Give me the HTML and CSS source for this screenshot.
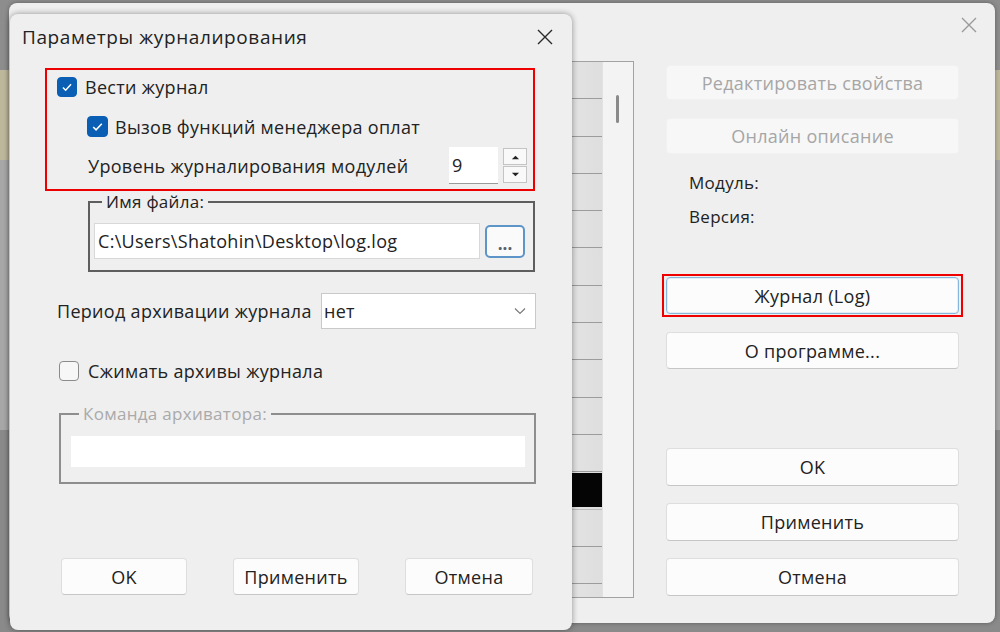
FILE: index.html
```html
<!DOCTYPE html>
<html lang="ru">
<head>
    <meta charset="UTF-8">
    <title>Параметры журналирования</title>
    <link rel="stylesheet" href="styles.css">
</head>
<body>
<div class="desktop">

    <!-- main window, mostly hidden behind the dialog -->
    <div class="window main-window">
        <div class="main-titlebar">
            <svg class="close close-muted" viewBox="0 0 16 16"><path d="M1 1L15 15M15 1L1 15"/></svg>
        </div>
        <div class="main-body">
            <div class="module-list">
                <div class="rows">
                    <div class="row"></div>
                    <div class="row"></div>
                    <div class="row"></div>
                    <div class="row"></div>
                    <div class="row"></div>
                    <div class="row"></div>
                    <div class="row"></div>
                    <div class="row"></div>
                    <div class="row"></div>
                    <div class="row"></div>
                    <div class="row"></div>
                    <div class="row row-black"><span class="cell"></span></div>
                    <div class="row"></div>
                    <div class="row"></div>
                    <div class="row"></div>
                </div>
                <div class="scrollbar"><span class="thumb"></span></div>
            </div>

            <div class="side-panel">
                <button class="btn btn-disabled">Редактировать свойства</button>
                <button class="btn btn-disabled btn-online">Онлайн описание</button>
                <div class="info info-module">Модуль:</div>
                <div class="info info-version">Версия:</div>
                <div class="mark mark-log">
                    <button class="btn btn-focus">Журнал (Log)</button>
                </div>
                <button class="btn btn-about">О программе...</button>
                <button class="btn btn-ok">OK</button>
                <button class="btn btn-apply">Применить</button>
                <button class="btn btn-apply">Отмена</button>
            </div>
        </div>
    </div>

    <!-- logging options dialog -->
    <div class="window dialog">
        <div class="titlebar">
            <span class="title">Параметры журналирования</span>
            <svg class="close" viewBox="0 0 16 16"><path d="M1 1L15 15M15 1L1 15"/></svg>
        </div>

        <div class="dialog-body">
            <div class="mark mark-options">
                <div class="check-row">
                    <span class="check checked"><svg viewBox="0 0 20 20"><path d="M5.5 10.5l3 3 6-6.5"/></svg></span>
                    <span>Вести журнал</span>
                </div>
                <div class="check-row check-sub">
                    <span class="check checked"><svg viewBox="0 0 20 20"><path d="M5.5 10.5l3 3 6-6.5"/></svg></span>
                    <span>Вызов функций менеджера оплат</span>
                </div>
                <div class="level-row">
                    <span>Уровень журналирования модулей</span>
                    <div class="spin">
                        <span class="spin-value">9</span>
                        <div class="spin-buttons">
                            <span class="spin-btn"><svg viewBox="0 0 10 6"><path d="M1 5.5L5 1.5 9 5.5Z"/></svg></span>
                            <span class="spin-btn"><svg viewBox="0 0 10 6"><path d="M1 0.5L5 4.5 9 0.5Z"/></svg></span>
                        </div>
                    </div>
                </div>
            </div>

            <fieldset class="group file-group">
                <legend>Имя файла:</legend>
                <div class="file-row">
                    <div class="edit file-edit">C:\Users\Shatohin\Desktop\log.log</div>
                    <button class="browse">...</button>
                </div>
            </fieldset>

            <div class="period-row">
                <span>Период архивации журнала</span>
                <div class="combo">
                    <span>нет</span>
                    <svg viewBox="0 0 12 8"><path d="M1 1.5L6 6.5 11 1.5"/></svg>
                </div>
            </div>

            <div class="check-row compress-row">
                <span class="check"></span>
                <span>Сжимать архивы журнала</span>
            </div>

            <fieldset class="group archiver-group">
                <legend>Команда архиватора:</legend>
                <div class="edit archiver-edit"></div>
            </fieldset>

            <div class="dialog-buttons">
                <button class="btn btn-dialog">OK</button>
                <button class="btn btn-dialog">Применить</button>
                <button class="btn btn-dialog btn-cancel">Отмена</button>
            </div>
        </div>
    </div>

</div>
</body>
</html>
```

FILE: styles.css
```css
* {
    box-sizing: border-box;
}

html, body {
    margin: 0;
    padding: 0;
}

body {
    font-family: "Open Sans", "Noto Sans", sans-serif;
    font-size: 18px;
    letter-spacing: 0.3px;
    color: #222222;
    overflow: hidden;
}

.desktop {
    position: relative;
    width: 1000px;
    height: 632px;
    background: linear-gradient(to bottom, #8d8d8d 0, #8d8d8d 70px, #bdb79c 70px, #bdb79c 160px, #a7a7a7 160px, #a7a7a7 430px, #8a8a8a 430px);
}

.window {
    position: absolute;
    background-color: #efefef;
}

/* ---------- main window ---------- */

.main-window {
    left: 9px;
    top: 3px;
    width: 986px;
    height: 620px;
    border-radius: 8px;
    box-shadow: 0 0 4px rgba(0, 0, 0, 0.35);
    display: flex;
    flex-direction: column;
}

.main-titlebar {
    height: 43px;
    display: flex;
    justify-content: flex-end;
    align-items: center;
    padding-right: 18px;
}

.close {
    width: 16px;
    height: 16px;
    fill: none;
    stroke: #2a2a2a;
    stroke-width: 1.4;
}

.close-muted {
    stroke: #9a9a9a;
}

.main-body {
    display: flex;
    padding-top: 15px;
    padding-right: 36px;
}

.module-list {
    flex: 1;
    height: 537px;
    margin-left: 12px;
    border: 1px solid #a2a2a2;
    display: flex;
    overflow: hidden;
}

.rows {
    flex: 1;
    display: flex;
    flex-direction: column;
}

.row {
    flex: 0 0 37.3px;
    border-bottom: 1px solid #9c9c9c;
    background: linear-gradient(to right, #f6f6f6, #ebebeb 85%, #dedede);
    display: flex;
    align-items: center;
}

.row-black .cell {
    margin-left: auto;
    width: 31px;
    height: 34px;
    background-color: #050505;
}

.row-black {
    border-bottom-color: #bdbdbd;
}

.scrollbar {
    width: 31px;
    background-color: #f3f3f3;
    border-left: 1px solid #e2e2e2;
    padding-top: 33px;
    padding-left: 13px;
}

.thumb {
    display: block;
    width: 3px;
    height: 28px;
    border-radius: 2px;
    background-color: #8a8a8a;
}

.side-panel {
    width: 293px;
    margin-left: 32px;
    padding-top: 4px;
    display: flex;
    flex-direction: column;
}

.btn {
    font-family: inherit;
    font-size: 18px;
    letter-spacing: 0.3px;
    color: #222222;
    background-color: #fcfcfc;
    border: 1px solid #dedede;
    border-bottom-color: #c6c6c6;
    border-radius: 4px;
    height: 37px;
    padding: 0;
}

.btn-disabled {
    height: 35px;
    color: #a6a6a6;
    background-color: #f7f7f7;
    border-color: #f1f1f1;
}

.btn-online {
    height: 36px;
    margin-top: 18px;
}

.info {
    line-height: 22px;
    padding-left: 23px;
    font-size: 17px;
}

.info-module {
    margin-top: 18px;
}

.info-version {
    margin-top: 12px;
}

.mark {
    border: 2px solid #ee0000;
}

.mark-log {
    margin: 46px -4px 0;
    padding: 1px 2px;
}

.mark-log .btn {
    width: 100%;
}

.btn-focus {
    border: 1px solid #86b6dc;
    box-shadow: inset 0 0 0 1px #e4eef7;
}

.btn-about {
    margin-top: 15px;
}

.btn-ok {
    margin-top: 79px;
    height: 38px;
}

.btn-apply {
    margin-top: 17px;
    height: 38px;
}

/* ---------- dialog ---------- */

.dialog {
    left: 10px;
    top: 14px;
    width: 562px;
    height: 616px;
    border-radius: 8px;
    box-shadow: 0 0 6px rgba(0, 0, 0, 0.4);
}

.titlebar {
    height: 46px;
    display: flex;
    align-items: center;
    justify-content: space-between;
    padding: 0 19px 0 12px;
}

.title {
    font-size: 19px;
    letter-spacing: 0.6px;
}

.dialog-body {
    display: flex;
    flex-direction: column;
    align-items: flex-start;
    padding-left: 35px;
}

.mark-options {
    margin-top: 8px;
    width: 490px;
    height: 123px;
    padding: 7px 6px 0 10px;
}

.check-row {
    display: flex;
    align-items: center;
    height: 20px;
    gap: 8px;
}

.check {
    width: 20px;
    height: 20px;
    border-radius: 4px;
    border: 1px solid #8b8b8b;
    background-color: #f7f7f7;
    display: flex;
}

.check.checked {
    background-color: #0a5fb4;
    border-color: #0a5fb4;
}

.check svg {
    width: 100%;
    height: 100%;
    fill: none;
    stroke: #ffffff;
    stroke-width: 1.6;
}

.check-sub {
    margin-top: 19px;
    margin-left: 30px;
    gap: 7px;
    height: 21px;
}

.check-sub .check {
    width: 21px;
    height: 21px;
}

.level-row {
    margin-top: 10px;
    margin-left: 31px;
    display: flex;
    align-items: center;
    justify-content: space-between;
}

.spin {
    display: flex;
    align-items: center;
    gap: 5px;
}

.spin-value {
    width: 49px;
    height: 37px;
    line-height: 36px;
    padding-left: 3px;
    background-color: #ffffff;
    border-bottom: 1px solid #9a9a9a;
}

.spin-buttons {
    display: flex;
    flex-direction: column;
    gap: 1px;
}

.spin-btn {
    width: 24px;
    height: 17px;
    border: 1px solid #c4c4c4;
    background-color: #f9f9f9;
    display: flex;
    align-items: center;
    justify-content: center;
}

.spin-btn svg {
    width: 9px;
    height: 6px;
    fill: #222;
}

.group {
    margin: 0;
    border: 2px solid #5e5e5e;
}

.group legend {
    font-size: 17px;
    line-height: 18px;
    padding: 0 4px;
    margin-left: 8px;
}

.file-group {
    margin-top: 2px;
    margin-left: 43px;
    width: 447px;
    padding: 12px 8px 11px 4px;
}

.file-row {
    display: flex;
    align-items: center;
    gap: 5px;
}

.edit {
    background-color: #ffffff;
}

.file-edit {
    flex: 1;
    height: 36px;
    line-height: 34px;
    padding-left: 3px;
    border: 1px solid #d8d8d8;
    white-space: nowrap;
}

.browse {
    width: 40px;
    height: 33px;
    font-family: inherit;
    font-size: 17px;
    font-weight: bold;
    color: #56616c;
    background-color: #fafafa;
    border: 2px solid #5e95c9;
    border-radius: 5px;
    padding: 4px 0 0;
}

.period-row {
    margin-top: 21px;
    margin-left: 12px;
    width: 479px;
    display: flex;
    align-items: center;
    justify-content: space-between;
}

.combo {
    width: 215px;
    height: 36px;
    background-color: #ffffff;
    border: 1px solid #c9c9c9;
    display: flex;
    align-items: center;
    justify-content: space-between;
    padding: 0 9px 0 2px;
}

.combo svg {
    width: 12px;
    height: 8px;
    fill: none;
    stroke: #7a7a7a;
    stroke-width: 1.2;
}

.compress-row {
    margin-top: 32px;
    margin-left: 14px;
    gap: 9px;
}

.archiver-group {
    margin-top: 24px;
    margin-left: 14px;
    width: 477px;
    border-color: #8e8e8e;
    padding: 13px 9px 15px 10px;
}

.archiver-group legend {
    color: #aaaaaa;
}

.archiver-edit {
    height: 31px;
}

.dialog-buttons {
    margin-top: 74px;
    margin-left: 16px;
    display: flex;
    gap: 46px;
}

.btn-dialog {
    width: 126px;
}

.btn-cancel {
    width: 128px;
}
```
